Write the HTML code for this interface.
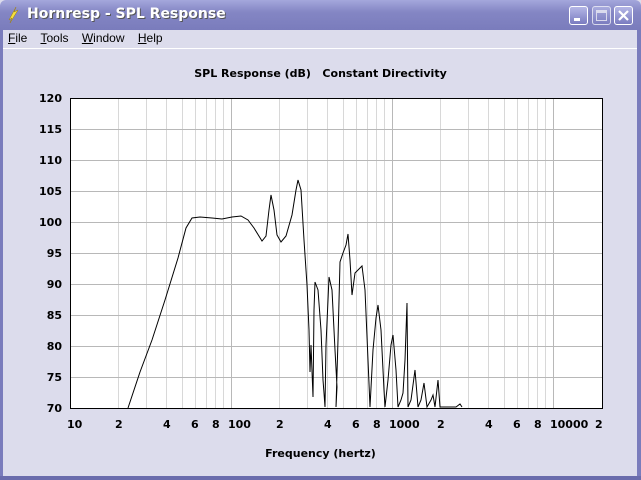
<!DOCTYPE html>
<html><head><meta charset="utf-8"><style>
body{margin:0;width:641px;height:480px;overflow:hidden;background:#dcdcec;font-family:"DejaVu Sans","Liberation Sans",sans-serif;position:relative}
.tb{position:absolute;left:0;top:0;width:641px;height:30px;background:linear-gradient(#a4a7dc,#8486c4 40%,#7a7cbc);border-radius:6px 6px 0 0}
.tt{position:absolute;left:27px;top:6px;color:#fff;font:bold 14px "DejaVu Sans",sans-serif;text-shadow:1px 1px #555}
.btn{position:absolute;top:6px;width:19px;height:19px;border:1px solid #fff;border-radius:3px;background:linear-gradient(#b4b6e6,#7a7cc0);box-sizing:border-box}
.menu{position:absolute;top:31px;font:12px "Liberation Sans",sans-serif;color:#000}
.menu span{margin-right:10px}
.lb{position:absolute;font:bold 11px "DejaVu Sans",sans-serif;color:#000}
.yl{position:absolute;right:579px;font:bold 11px "DejaVu Sans",sans-serif}
</style></head><body>
<div style="position:absolute;left:0;top:30px;width:3px;height:450px;background:#7a7cbc"></div>
<div style="position:absolute;right:0;top:30px;width:4px;height:450px;background:#7a7cbc"></div>
<div style="position:absolute;left:0;top:476px;width:641px;height:4px;background:#6a6cac"></div>
<div class="tb">
<svg style="position:absolute;left:6px;top:6px" width="14" height="18"><path d="M10 1 L3 14 L6 12 L4 17 L12 4 L8 6 Z" fill="#f4e040" stroke="#a08000" stroke-width="0.5"/></svg>
<div class="tt">Hornresp - SPL Response</div>
<div class="btn" style="left:569px"><div style="position:absolute;left:4px;top:11px;width:6px;height:3px;background:#fff"></div></div>
<div class="btn" style="left:592px;opacity:.7"><div style="position:absolute;left:3px;top:3px;width:11px;height:11px;border:1px solid #fff;border-top-width:3px;box-sizing:border-box"></div></div>
<div class="btn" style="left:614px"><svg width="17" height="17" style="position:absolute;left:0;top:0"><path d="M4 4L13 13M13 4L4 13" stroke="#fff" stroke-width="2.2"/></svg></div>
</div>
<div class="menu" style="left:8px"><span><u>F</u>ile</span> <span><u>T</u>ools</span> <span><u>W</u>indow</span> <span><u>H</u>elp</span></div>
<div style="position:absolute;left:3px;top:48px;width:634px;height:1px;background:#fff"></div>
<div class="lb" style="left:0;width:641px;text-align:center;top:67px;font-size:11px">SPL Response (dB)&nbsp;&nbsp; Constant Directivity</div>
<div class="yl" style="top:92px">120</div><div class="yl" style="top:123px">115</div><div class="yl" style="top:154px">110</div><div class="yl" style="top:185px">105</div><div class="yl" style="top:216px">100</div><div class="yl" style="top:247px">95</div><div class="yl" style="top:278px">90</div><div class="yl" style="top:309px">85</div><div class="yl" style="top:340px">80</div><div class="yl" style="top:371px">75</div><div class="yl" style="top:402px">70</div>
<div class="lb" style="top:418px;left:67px">10</div><div class="lb" style="top:418px;left:115px">2</div><div class="lb" style="top:418px;left:163px">4</div><div class="lb" style="top:418px;left:191px">6</div><div class="lb" style="top:418px;left:212px">8</div><div class="lb" style="top:418px;left:228px">100</div><div class="lb" style="top:418px;left:276px">2</div><div class="lb" style="top:418px;left:324px">4</div><div class="lb" style="top:418px;left:352px">6</div><div class="lb" style="top:418px;left:373px">8</div><div class="lb" style="top:418px;left:389px">1000</div><div class="lb" style="top:418px;left:437px">2</div><div class="lb" style="top:418px;left:485px">4</div><div class="lb" style="top:418px;left:513px">6</div><div class="lb" style="top:418px;left:534px">8</div><div class="lb" style="top:418px;left:550px">10000</div><div class="lb" style="top:418px;left:595px">2</div>
<div class="lb" style="left:0;width:641px;text-align:center;top:447px">Frequency (hertz)</div>
<svg style="position:absolute;left:0;top:0" width="641" height="480">
<rect x="70.5" y="98.5" width="532" height="310" fill="#fff"/>
<g stroke="#d8d8d8" stroke-width="1">
<path d="M118.5 98V408M146.5 98V408M166.5 98V408M182.5 98V408M195.5 98V408M206.5 98V408M215.5 98V408M223.5 98V408M279.5 98V408M307.5 98V408M327.5 98V408M343.5 98V408M356.5 98V408M367.5 98V408M376.5 98V408M384.5 98V408M440.5 98V408M468.5 98V408M488.5 98V408M504.5 98V408M517.5 98V408M528.5 98V408M537.5 98V408M545.5 98V408"/>
</g>
<g stroke="#b8b8b8" stroke-width="1">
<path d="M231.5 98V408M392.5 98V408M553.5 98V408M70 129.5H602M70 160.5H602M70 191.5H602M70 222.5H602M70 253.5H602M70 284.5H602M70 315.5H602M70 346.5H602M70 377.5H602"/>
</g>
<rect x="70.5" y="98.5" width="532" height="310" fill="none" stroke="#000"/>
<polyline fill="none" stroke="#000" stroke-width="1" points="128,408 140,372 152,340 165,300 178,258 186,228 192,218 200,217 212,218 222,219 232,217 241,216 248,220 254,228 262,241 266,236 269,210 271,195 274,210 277,235 281,242 286,236 292,215 296,190 298,180 301,190 304,240 307,285 309,330 310,372 311,345 313,397 314,310 315,282 318,290 321,330 323,380 324,393 325,407 326,345 328,300 329,277 332,290 335,350 337,387 336,407 338,340 340,262 343,253 346,245 348,234 350,260 352,295 355,273 358,270 362,266 365,290 368,360 370,407 373,350 376,318 378,305 381,330 384,390 385,407 388,380 391,345 393,335 396,370 398,407 401,400 403,393 405,360 407,303 408,407 411,400 415,370 418,407 421,400 424,383 427,407 431,400 433,395 435,407 438,380 440,407 456,407 460,404 462,407"/>
</svg>
</body></html>
